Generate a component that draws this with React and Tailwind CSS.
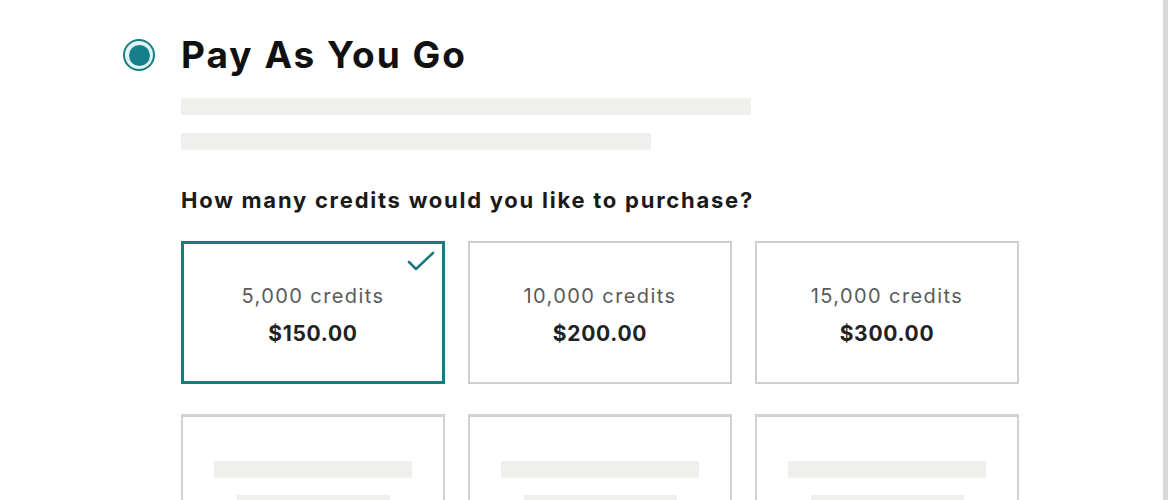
const credits = [
  { label: '5,000 credits', price: '$150.00', selected: true },
  { label: '10,000 credits', price: '$200.00' },
  { label: '15,000 credits', price: '$300.00' },
]

function CreditCard({ label, price, selected }) {
  return (
    <div
      className={
        selected
          ? 'relative flex h-[143px] flex-col items-center justify-center gap-[10px] border-[3px] border-[#1f7a80] bg-white pt-[4px]'
          : 'relative flex h-[143px] flex-col items-center justify-center gap-[10px] border-2 border-[#cfcfcf] bg-white pt-[4px]'
      }
    >
      {selected && (
        <svg
          className="absolute right-[6px] top-[6px] h-[22px] w-[30px]"
          viewBox="0 0 30 22"
          fill="none"
          stroke="#1f7a80"
          strokeWidth="2.6"
          strokeLinecap="round"
          strokeLinejoin="round"
        >
          <path d="M3 12 L10 19 L27 3" />
        </svg>
      )}
      <p className="text-[20px] leading-[28px] tracking-[1.4px] text-[#5a5a5a]">{label}</p>
      <p className="text-[21px] font-bold leading-[28px] tracking-[0.7px] text-[#222]">{price}</p>
    </div>
  )
}

function PlaceholderCard() {
  return (
    <div className="flex h-[143px] flex-col items-center border-2 border-t-[3px] border-[#d2d2d2] bg-white pt-[44px]">
      <div className="h-[17px] w-[198px] bg-[#efefec]" />
      <div className="mt-[17px] h-[17px] w-[153px] bg-[#efefec]" />
    </div>
  )
}

export default function App() {
  return (
    <div className="flex h-[500px] w-full overflow-hidden bg-white font-['Inter','Liberation_Sans',sans-serif]">
      <div className="flex-1 pl-[123px] pt-[35px]">
        <div className="flex h-[40px] items-center gap-[26px]">
          <div className="flex h-[32px] w-[32px] items-center justify-center rounded-full border-[2.5px] border-[#1a7c84] bg-[#dff5f5]">
            <div className="h-[21px] w-[21px] rounded-full bg-[#14808a]" />
          </div>
          <h1 className="text-[37px] font-bold leading-[40px] tracking-[2px] text-[#111]">Pay As You Go</h1>
        </div>

        <div className="ml-[58px]">
          <div className="mt-[23px] h-[17px] w-[570px] bg-[#efefec]" />
          <div className="mt-[18px] h-[17px] w-[470px] bg-[#efefec]" />

          <p className="mt-[36px] text-[22px] font-bold leading-[28px] tracking-[1.75px] text-[#1a1a1a]">
            How many credits would you like to purchase?
          </p>

          <div className="mt-[27px] grid w-[838px] grid-cols-3 gap-x-[23px] gap-y-[30px]">
            {credits.map((c) => (
              <CreditCard key={c.label} {...c} />
            ))}
            <PlaceholderCard />
            <PlaceholderCard />
            <PlaceholderCard />
          </div>
        </div>
      </div>
      <div className="w-[5px] bg-[#d9d9d9]" />
      <div className="w-[2px] bg-white" />
    </div>
  )
}
